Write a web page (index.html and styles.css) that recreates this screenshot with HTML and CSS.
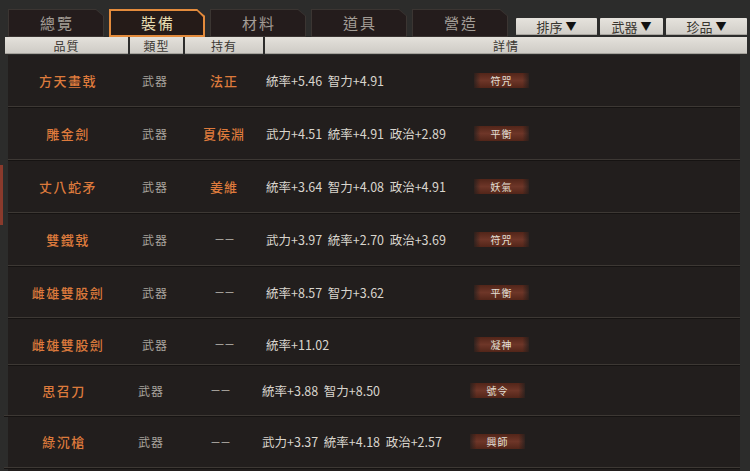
FILE: index.html
```html
<!DOCTYPE html>
<html>
<head>
<meta charset="utf-8">
<link rel="stylesheet" href="styles.css">
</head>
<body>
<div class="page">
  <div class="top">
    <div class="tabs">
      <div class="tab"><div class="tab-in">總覽</div></div>
      <div class="tab active"><div class="tab-in">裝備</div></div>
      <div class="tab"><div class="tab-in">材料</div></div>
      <div class="tab"><div class="tab-in">道具</div></div>
      <div class="tab"><div class="tab-in">營造</div></div>
    </div>
    <div class="filters">
      <div class="btn wide">排序<span class="tri">▼</span></div>
      <div class="btn">武器<span class="tri">▼</span></div>
      <div class="btn wide">珍品<span class="tri">▼</span></div>
    </div>
  </div>
  <div class="head">
    <div class="hc h-name">品質</div>
    <div class="hc h-type">類型</div>
    <div class="hc h-own">持有</div>
    <div class="hc h-det">詳情</div>
  </div>
  <div class="list">
    <div class="edge-mark"></div>
    <div class="row r1">
      <div class="c-name">方天畫戟</div><div class="c-type">武器</div><div class="c-own">法正</div>
      <div class="c-det"><span class="stats">統率+5.46&nbsp; 智力+4.91</span><span class="badge">符咒</span></div>
    </div>
    <div class="row r2">
      <div class="c-name">雕金劍</div><div class="c-type">武器</div><div class="c-own">夏侯淵</div>
      <div class="c-det"><span class="stats">武力+4.51&nbsp; 統率+4.91&nbsp; 政治+2.89</span><span class="badge">平衡</span></div>
    </div>
    <div class="row r3">
      <div class="c-name">丈八蛇矛</div><div class="c-type">武器</div><div class="c-own">姜維</div>
      <div class="c-det"><span class="stats">統率+3.64&nbsp; 智力+4.08&nbsp; 政治+4.91</span><span class="badge">妖氣</span></div>
    </div>
    <div class="row r4">
      <div class="c-name">雙鐵戟</div><div class="c-type">武器</div><div class="c-own none">－－</div>
      <div class="c-det"><span class="stats">武力+3.97&nbsp; 統率+2.70&nbsp; 政治+3.69</span><span class="badge">符咒</span></div>
    </div>
    <div class="row r5">
      <div class="c-name">雌雄雙股劍</div><div class="c-type">武器</div><div class="c-own none">－－</div>
      <div class="c-det"><span class="stats">統率+8.57&nbsp; 智力+3.62</span><span class="badge">平衡</span></div>
    </div>
    <div class="row r6">
      <div class="c-name">雌雄雙股劍</div><div class="c-type">武器</div><div class="c-own none">－－</div>
      <div class="c-det"><span class="stats">統率+11.02</span><span class="badge">凝神</span></div>
    </div>
    <div class="row r7 shift">
      <div class="c-name">思召刀</div><div class="c-type">武器</div><div class="c-own none">－－</div>
      <div class="c-det"><span class="stats">統率+3.88&nbsp; 智力+8.50</span><span class="badge">號令</span></div>
    </div>
    <div class="row r8 shift">
      <div class="c-name">綠沉槍</div><div class="c-type">武器</div><div class="c-own none">－－</div>
      <div class="c-det"><span class="stats">武力+3.37&nbsp; 統率+4.18&nbsp; 政治+2.57</span><span class="badge">興師</span></div>
    </div>
  </div>
</div>
</body>
</html>
```
FILE: styles.css
```css
* { box-sizing: border-box; }
html, body { margin: 0; padding: 0; }
body {
  width: 750px;
  height: 471px;
  overflow: hidden;
  background: #2c2c2b;
  font-family: "Noto Sans CJK TC", "Noto Sans", sans-serif;
}
.page { width: 750px; height: 471px; position: relative; }

.top {
  height: 37px;
  display: flex;
  align-items: flex-end;
  justify-content: space-between;
  padding-left: 8px;
  padding-right: 3px;
}
.tabs { display: flex; gap: 5px; align-items: flex-end; }
.tab {
  width: 96px;
  height: 28px;
  padding: 1px;
  background: #3b3532;
  clip-path: polygon(0 0, 88px 0, 96px 7px, 96px 28px, 0 28px);
}
.tab-in {
  width: 100%;
  height: 100%;
  background: #241c1c;
  clip-path: polygon(0 0, 87px 0, 94px 6px, 94px 28px, 0 28px);
  color: #a39d96;
  font-size: 15px;
  letter-spacing: 2px;
  text-indent: 2px;
  display: flex;
  align-items: center;
  justify-content: center;
  padding-bottom: 1px;
}
.tab.active {
  background: #e38b3c;
  padding: 2px;
  box-shadow: 0 0 4px #e38b3c;
}
.tab.active .tab-in {
  background: #251b18;
  color: #e6dcb0;
  clip-path: polygon(0 0, 86px 0, 92px 6px, 92px 28px, 0 28px);
}

.filters { display: flex; gap: 3px; margin-bottom: 2px; }
.btn {
  width: 63px;
  height: 17px;
  background: linear-gradient(#e6e3dd, #cfccc6);
  border-radius: 1px;
  box-shadow: inset 0 -1px #a9a6a0;
  color: #38352f;
  font-size: 13px;
  display: flex;
  align-items: center;
  justify-content: center;
  gap: 3px;
  line-height: 1;
}
.btn.wide { width: 81px; }
.tri { font-size: 11px; color: #111; }

.head {
  height: 18px;
  display: flex;
  gap: 2px;
  padding-left: 5px;
  padding-right: 3px;
}
.hc {
  height: 17px;
  background: linear-gradient(#e4e1db, #cdcac4);
  box-shadow: inset 0 -1px #a4a19b;
  color: #3b3833;
  font-size: 12px;
  display: flex;
  align-items: center;
  justify-content: center;
  letter-spacing: 1px;
  line-height: 1;
}
.h-name { width: 123px; }
.h-type { width: 53px; }
.h-own { width: 78px; }
.h-det { flex: 1; }

.list {
  position: relative;
  height: 416px;
  margin-left: 8px;
  margin-right: 10px;
  background: #221e1d;
}
.edge-mark {
  position: absolute;
  left: -8px;
  top: 110px;
  width: 3px;
  height: 60px;
  background: #8a3a2c;
}
.row {
  display: grid;
  grid-template-columns: 120px 54px 84px 1fr;
  align-items: center;
  border-bottom: 1px solid #3d3834;
  box-shadow: 0 1px 0 #161312;
}
.r1 { height: 52px; }
.r2, .r3, .r4 { height: 53px; }
.r5 { height: 52px; padding-top: 1px; }
.r6 { height: 47px; padding-top: 6px; }
.r7 { height: 51px; }
.r8 { height: 52px; }
.row.shift { margin-left: -4px; }

.c-name {
  text-align: center;
  color: #dd7a3c;
  font-size: 13px;
  letter-spacing: 1.5px;
  font-weight: 500;
}
.c-type {
  text-align: center;
  color: #a7a39c;
  font-size: 12px;
  letter-spacing: 1px;
}
.c-own {
  text-align: center;
  color: #dd7a3c;
  font-size: 13px;
  letter-spacing: 1px;
  font-weight: 500;
}
.c-own.none { color: #a7a39c; font-size: 11px; letter-spacing: -1px; }
.c-det {
  display: flex;
  align-items: center;
}
.stats {
  width: 208px;
  color: #d9d5cd;
  font-size: 12.5px;
  white-space: nowrap;
}
.badge {
  width: 55px;
  height: 15px;
  display: flex;
  align-items: center;
  justify-content: center;
  font-size: 10px;
  color: #e4e0d8;
  letter-spacing: 1px;
  background:
    linear-gradient(to right, rgba(34,30,29,0.8), rgba(34,30,29,0) 12%, rgba(34,30,29,0) 88%, rgba(34,30,29,0.8)),
    linear-gradient(#522519, #6e3628 50%, #522519);
}
```
